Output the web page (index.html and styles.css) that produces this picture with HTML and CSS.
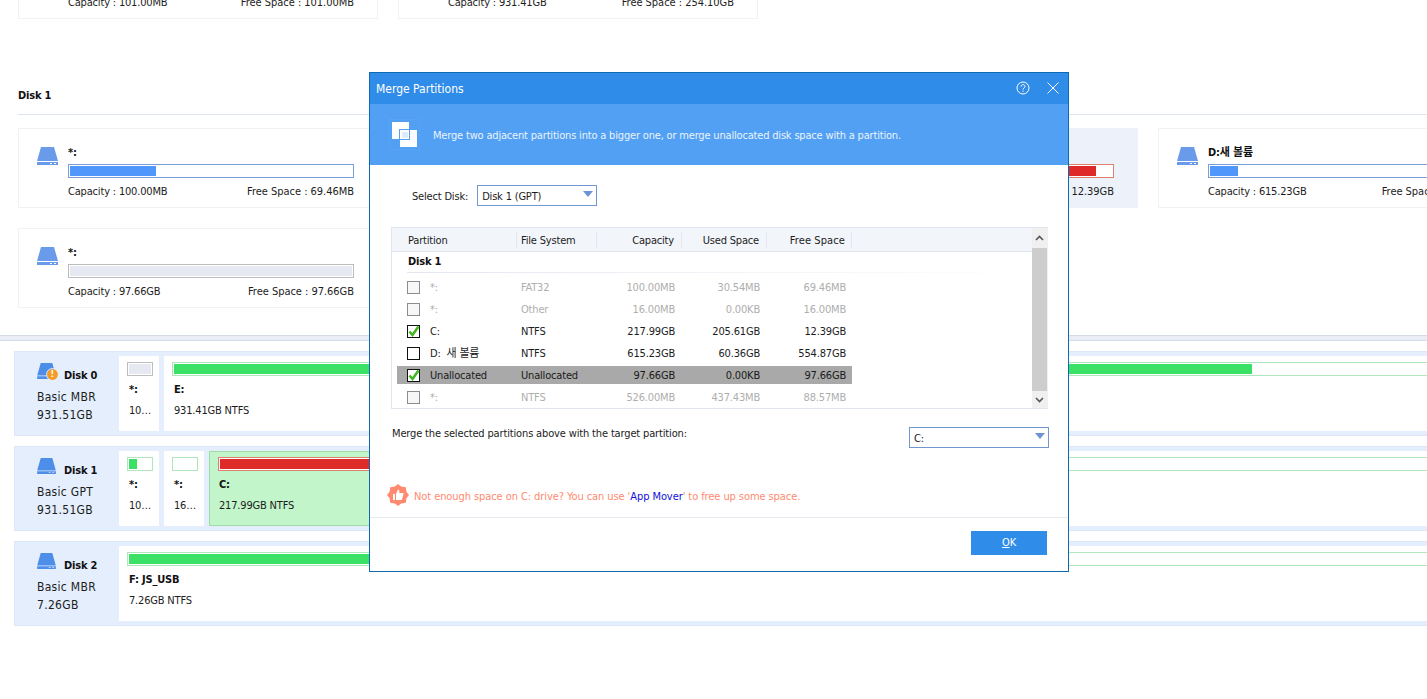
FILE: index.html
```html
<!DOCTYPE html>
<html lang="en">
<head>
<meta charset="utf-8">
<title>Merge Partitions</title>
<link rel="stylesheet" href="styles.css">
</head>
<body>
<svg class="defs" width="0" height="0" aria-hidden="true">
  <symbol id="disk" viewBox="0 0 21 18">
    <path d="M4 0H17L21 14H0Z" fill="currentColor"/>
    <path fill-rule="evenodd" d="M0 15H21V18H0ZM13 16V17H15V16ZM17 16V17H19V16Z" fill="currentColor"/>
  </symbol>
  <symbol id="tick" viewBox="0 0 13 13">
    <path d="M2.5 6.5L5.5 10L11.5 1.5" fill="none" stroke="#43b51f" stroke-width="2.6"/>
  </symbol>
</svg>

<main class="page">
  <section class="cards">
    <article class="card"><svg class="disk-icon"><use href="#disk"/></svg><div class="card-body"><div class="card-name">E:</div><div class="bar"><i class="fill blue" style="width:100%"></i></div><div class="stats"><span>Capacity : 101.00MB</span><span>Free Space : 101.00MB</span></div></div></article>
    <article class="card"><svg class="disk-icon"><use href="#disk"/></svg><div class="card-body"><div class="card-name">E:</div><div class="bar"><i class="fill blue" style="width:72%"></i></div><div class="stats"><span>Capacity : 931.41GB</span><span>Free Space : 254.10GB</span></div></div></article>
  </section>

  <h2 class="disk-title">Disk 1</h2>
  <section class="cards">
    <article class="card"><svg class="disk-icon"><use href="#disk"/></svg><div class="card-body"><div class="card-name">*:</div><div class="bar"><i class="fill blue" style="width:30.5%"></i></div><div class="stats"><span>Capacity : 100.00MB</span><span>Free Space : 69.46MB</span></div></div></article>
    <article class="card"><svg class="disk-icon"><use href="#disk"/></svg><div class="card-body"><div class="card-name">*:</div><div class="bar"><i class="fill blue" style="width:0"></i></div><div class="stats"><span>Capacity : 16.00MB</span><span>Free Space : 16.00MB</span></div></div></article>
    <article class="card selected"><svg class="disk-icon"><use href="#disk"/></svg><div class="card-body"><div class="card-name">C:</div><div class="bar bar-red"><i class="fill red" style="width:94.3%"></i></div><div class="stats"><span>Capacity : 217.99GB</span><span>Free Space : 12.39GB</span></div></div></article>
    <article class="card"><svg class="disk-icon"><use href="#disk"/></svg><div class="card-body"><div class="card-name">D:새 볼륨</div><div class="bar"><i class="fill blue" style="width:9.8%"></i></div><div class="stats"><span>Capacity : 615.23GB</span><span>Free Space : 554.87GB</span></div></div></article>
    <article class="card"><svg class="disk-icon"><use href="#disk"/></svg><div class="card-body"><div class="card-name">*:</div><div class="bar bar-grey"><i class="fill grey" style="width:100%"></i></div><div class="stats"><span>Capacity : 97.66GB</span><span>Free Space : 97.66GB</span></div></div></article>
  </section>

  <div class="divider"></div>

  <section class="disks">
    <div class="disk-row">
      <div class="disk-side">
        <div class="disk-head"><span class="disk-badge"><svg class="disk-icon bright"><use href="#disk"/></svg><b class="warn">!</b></span><b class="disk-name">Disk 0</b></div>
        <div>Basic MBR</div><div>931.51GB</div>
      </div>
      <div class="part small"><div class="mini mini-grey"><i class="fill grey" style="width:100%"></i></div><b>*:</b><span class="part-info">100.00MB NTFS</span></div>
      <div class="part wide"><div class="mini"><i class="fill green" style="width:78%"></i></div><b>E:</b><span class="part-info">931.41GB NTFS</span></div>
    </div>
    <div class="disk-row">
      <div class="disk-side">
        <div class="disk-head"><svg class="disk-icon bright"><use href="#disk"/></svg><b class="disk-name">Disk 1</b></div>
        <div>Basic GPT</div><div>931.51GB</div>
      </div>
      <div class="part small"><div class="mini"><i class="fill green" style="width:36%"></i></div><b>*:</b><span class="part-info">100.00MB FAT32</span></div>
      <div class="part small"><div class="mini"></div><b>*:</b><span class="part-info">16.00MB Other</span></div>
      <div class="part part-c"><div class="mini mini-red"><i class="fill red" style="width:94%"></i></div><b>C:</b><span class="part-info">217.99GB NTFS</span></div>
      <div class="part wide"><div class="mini"></div><b>D:새 볼륨</b><span class="part-info">615.23GB NTFS</span></div>
    </div>
    <div class="disk-row">
      <div class="disk-side">
        <div class="disk-head"><svg class="disk-icon bright"><use href="#disk"/></svg><b class="disk-name">Disk 2</b></div>
        <div>Basic MBR</div><div>7.26GB</div>
      </div>
      <div class="part wide"><div class="mini"><i class="fill green" style="width:50%"></i></div><b>F: JS_USB</b><span class="part-info">7.26GB NTFS</span></div>
    </div>
  </section>
</main>

<div class="dialog" role="dialog" aria-label="Merge Partitions">
  <header class="dlg-title">
    <span class="dlg-name">Merge Partitions</span>
    <svg class="dlg-btn" width="14" height="14" viewBox="0 0 14 14"><circle cx="7" cy="7" r="6" fill="none" stroke="#fff"/><path d="M5 5.6C5 3 9 3 9 5.4C9 7 7 6.8 7 8.6" fill="none" stroke="#fff"/><rect x="6.5" y="9.6" width="1" height="1.2" fill="#fff"/></svg>
    <svg class="dlg-btn" width="12" height="12" viewBox="0 0 12 12"><path d="M.5.5L11.5 11.5M11.5.5L.5 11.5" stroke="#fff" fill="none"/></svg>
  </header>
  <div class="banner">
    <svg class="banner-icon" width="25" height="25" viewBox="0 0 25 25">
      <rect x="-2.5" y="-2.5" width="30" height="30" fill="none" stroke="#5fa8f5" stroke-dasharray="2 2"/>
      <rect width="17" height="17" fill="#fff"/>
      <rect x="7" y="7" width="11" height="11" fill="#52a0f3"/>
      <rect x="8" y="8" width="9" height="9" fill="#fff"/>
      <path d="M18 8H25V25H8V18H18Z" fill="#fff"/>
      <rect x="10" y="10" width="6" height="6" fill="#dcebfd"/>
    </svg>
    <p>Merge two adjacent partitions into a bigger one, or merge unallocated disk space with a partition.</p>
  </div>
  <div class="select-row">
    <label>Select Disk:</label>
    <div class="select select-disk"><span>Disk 1 (GPT)</span><i class="caret"></i></div>
  </div>
  <div class="table">
    <div class="table-main">
      <div class="thead">
        <div class="th th-part">Partition</div>
        <div class="th th-fs">File System</div>
        <div class="th th-cap">Capacity</div>
        <div class="th th-used">Used Space</div>
        <div class="th th-free">Free Space</div>
      </div>
      <div class="group">Disk 1</div>
      <div class="tr off"><span class="check"></span><span>*:</span><span>FAT32</span><span class="num">100.00MB</span><span class="num">30.54MB</span><span class="num">69.46MB</span></div>
      <div class="tr off"><span class="check"></span><span>*:</span><span>Other</span><span class="num">16.00MB</span><span class="num">0.00KB</span><span class="num">16.00MB</span></div>
      <div class="tr"><span class="check"><svg width="13" height="13"><use href="#tick"/></svg></span><span>C:</span><span>NTFS</span><span class="num">217.99GB</span><span class="num">205.61GB</span><span class="num">12.39GB</span></div>
      <div class="tr"><span class="check"></span><span>D:&nbsp; 새 볼륨</span><span>NTFS</span><span class="num">615.23GB</span><span class="num">60.36GB</span><span class="num">554.87GB</span></div>
      <div class="tr hot"><span class="check"><svg width="13" height="13"><use href="#tick"/></svg></span><span>Unallocated</span><span>Unallocated</span><span class="num">97.66GB</span><span class="num">0.00KB</span><span class="num">97.66GB</span></div>
      <div class="tr off"><span class="check"></span><span>*:</span><span>NTFS</span><span class="num">526.00MB</span><span class="num">437.43MB</span><span class="num">88.57MB</span></div>
    </div>
    <div class="scrollbar">
      <div class="sb-btn"><svg width="9" height="6" viewBox="0 0 9 6"><path d="M1 5L4.5 1.5L8 5" fill="none" stroke="#555" stroke-width="1.6"/></svg></div>
      <div class="sb-thumb"></div>
      <div class="sb-btn"><svg width="9" height="6" viewBox="0 0 9 6"><path d="M1 1L4.5 4.5L8 1" fill="none" stroke="#555" stroke-width="1.6"/></svg></div>
    </div>
  </div>
  <div class="merge-row">
    <span class="merge-label">Merge the selected partitions above with the target partition:</span>
    <div class="select select-target"><span>C:</span><i class="caret"></i></div>
  </div>
  <div class="hint">
    <svg width="22" height="22" viewBox="0 0 22 22"><path d="M11 0L14.2 2.6L18.8 3.2L19.4 7.8L22 11L19.4 14.2L18.8 18.8L14.2 19.4L11 22L7.8 19.4L3.2 18.8L2.6 14.2L0 11L2.6 7.8L3.2 3.2L7.8 2.6Z" fill="#ff8a70"/><path d="M6 10H8V16H6ZM9 10L11 5.5C12.4 5.5 12.6 7 12.2 9H16C16.6 9 16.8 9.8 16.4 10.4L15 15.4C14.8 16 14.4 16 14 16H9Z" fill="#fff"/></svg>
    <p>Not enough space on C: drive? You can use '<a href="#">App Mover</a>' to free up some space.</p>
  </div>
  <footer class="dlg-foot"><button class="ok" type="button"><u>O</u>K</button></footer>
</div>
</body>
</html>
```
FILE: styles.css
```css
* { box-sizing: border-box; }
html, body { margin: 0; height: 100%; }
body {
  position: relative;
  overflow: hidden;
  background: #fff;
  color: #1c1c1c;
  font: 11px/14px "DejaVu Sans Condensed", "DejaVu Sans", "Noto Sans CJK KR", sans-serif;
  font-stretch: condensed;
  letter-spacing: -0.18px;
}
.defs { position: absolute; }
p, h2 { margin: 0; }
.page { width: 1560px; margin-top: -61px; }

/* partition cards */
.cards { display: flex; flex-wrap: wrap; gap: 20px; width: 1520px; margin-left: 18px; }
.card {
  display: flex;
  gap: 10px;
  width: 360px;
  height: 80px;
  padding: 18px 23px 0 18px;
  border: 1px solid #f0f2f6;
  background: #fff;
}
.card.selected { background: #edf2fa; border-color: #edf2fa; }
.disk-icon { flex: none; width: 21px; height: 18px; color: #6a9bea; }
.disk-icon.bright { width: 19px; height: 16px; color: #4d8ee9; }
.card-body { flex: 1; min-width: 0; }
.card-name { height: 18px; margin-top: -1px; font-weight: 700; color: #111; line-height: 14px; }
.bar { height: 14px; padding: 1px; border: 1px solid #7b9dd6; background: #fff; }
.bar-red { border-color: #df7f6e; }
.bar-grey { border-color: #bdbdbd; }
.fill { display: block; height: 100%; }
.fill.blue { background: #4f97fb; }
.fill.red { background: #df2a2a; }
.fill.grey { background: #e6e9f1; }
.fill.green { background: #3be164; }
.stats { display: flex; justify-content: space-between; margin-top: 7px; }
.stats span:last-child { letter-spacing: -0.03px; }

.disk-title {
  display: flex;
  align-items: center;
  height: 28px;
  margin: 68px 0 13px 18px;
  padding-bottom: 11px;
  border-bottom: 1px solid #dfe5f0;
  font-size: 11px;
  line-height: 15px;
  color: #111;
}

.divider {
  height: 6px;
  margin-top: 27px;
  border-top: 1px solid #d5dbe8;
  border-bottom: 1px solid #d5dce9;
  background: #e9edf6;
}

/* disk map */
.disks { display: flex; flex-direction: column; gap: 10px; margin: 10px 0 0 14px; width: 1413px; overflow: hidden; }
.disk-row {
  display: flex;
  gap: 5px;
  height: 85px;
  padding: 4px 0;
  border: 1px solid #dde7f6;
  border-right: 0;
  background: #e4eefc;
  overflow: hidden;
}
.disk-side { flex: none; width: 99px; padding: 7px 0 0 22px; font-size: 12px; line-height: 18px; letter-spacing: 0.3px; }
.disk-head { display: flex; align-items: flex-end; gap: 8px; height: 16px; margin-bottom: 9px; }
.disk-name { margin-bottom: -4px; font-size: 11px; line-height: 14px; color: #111; letter-spacing: -0.18px; }
.disk-badge { position: relative; display: flex; }
.warn {
  position: absolute;
  right: -2px;
  bottom: -1px;
  width: 11px;
  height: 11px;
  border-radius: 50%;
  background: #f59a23;
  color: #fff;
  font-size: 9px;
  line-height: 11px;
  text-align: center;
  outline: 1px solid #e4eefc;
}
.part {
  flex: none;
  display: flex;
  flex-direction: column;
  padding: 6px 6px 0 8px;
  background: #fff;
  overflow: hidden;
}
.part b { margin: 7px 0 0 2px; color: #111; white-space: nowrap; }
.part-info { margin: 7px 0 0 2px; white-space: nowrap; overflow: hidden; text-overflow: ellipsis; }
.part.small { width: 40px; }
.part.wide { width: 1400px; }
.part-c { width: 750px; background: #c2f5ca; border: 1px solid #9fdcab; padding: 5px 5px 0 8px; }
.part-c b, .part-c .part-info { margin-left: 1px; }
.mini { flex: none; height: 14px; padding: 1px; border: 1px solid #b1e5bd; background: #fff; }
.mini-grey { border-color: #bdbdbd; }
.mini-red { border-color: #df7f6e; }

/* dialog */
.dialog {
  position: absolute;
  left: 369px;
  top: 72px;
  display: flex;
  flex-direction: column;
  width: 700px;
  height: 500px;
  border: 1px solid #0f6ab4;
  background: #fff;
}
.dlg-title { display: flex; align-items: center; gap: 17px; flex: none; height: 31px; padding: 0 9px 2px 6px; background: #2f8ce8; color: #fff; font-size: 12px; letter-spacing: 0; }
.dlg-name { flex: 1; padding-top: 2px; }
.dlg-btn { flex: none; }
.banner { display: flex; align-items: center; gap: 16px; flex: none; height: 61px; padding-left: 22px; background: #52a0f3; color: #eaf3fe; }
.banner p { padding-top: 2px; }
.banner-icon { flex: none; overflow: visible; }
.select-row { display: flex; align-items: center; gap: 9px; margin: 20px 0 0 42px; }
.select-row label { padding-top: 3px; }
.select {
  display: flex;
  align-items: center;
  justify-content: space-between;
  height: 21px;
  padding: 1px 3px 0 4px;
  border: 1px solid #7196d1;
  background: #fff;
}
.select span { padding-top: 2px; }
.select-disk { width: 120px; }
.select-target { width: 140px; }
.caret { width: 0; height: 0; border: 5px solid transparent; border-top: 6px solid #6d93d6; border-bottom: 0; margin-bottom: 4px; }

.table { display: flex; height: 182px; margin: 21px 20px 0 21px; border: 1px solid #e1e5ef; }
.table-main { flex: none; width: 640px; }
.thead { display: flex; height: 24px; padding: 4px 0 3px 16px; background: #f2f5fa; border-bottom: 1px solid #dfe4ef; }
.th { height: 16px; line-height: 17px; border-right: 1px solid #e3e7f0; }
.th-part { width: 109px; }
.th-fs { width: 80px; padding-left: 4px; }
.th-cap { width: 85px; padding-right: 7px; text-align: right; }
.th-used { width: 85px; padding-right: 7px; text-align: right; }
.th-free { width: 85px; padding-right: 6px; text-align: right; letter-spacing: 0.1px; }
.group { height: 21px; margin-left: 15px; padding: 3px 0 0 1px; border-bottom: 1px solid; border-image: linear-gradient(90deg, #e3e7f0, #fff) 1; font-weight: 700; color: #111; margin-bottom: 5px; }
.tr {
  display: grid;
  grid-template-columns: 23px 91px 75px 79px 85px 86px;
  align-items: center;
  width: 455px;
  height: 18px;
  margin: 0 0 4px 5px;
  padding-left: 10px;
  white-space: nowrap;
}
.tr > span { padding-top: 2px; }
.tr.off { color: #aeaeae; }
.tr.hot { background: #a9a9a9; color: #1a1a1a; }
.num { text-align: right; }
.tr > .check { display: block; width: 13px; height: 13px; padding: 0; border: 1px solid #111; background: #fff; overflow: visible; }
.check svg { display: block; margin: -1px 0 0 -1px; }
.off > .check { border-color: #8c8c8c; background: #f7f7f7; }
.scrollbar { flex: none; display: flex; flex-direction: column; width: 16px; background: #f0f0f0; }
.sb-btn { flex: none; display: flex; align-items: center; justify-content: center; height: 20px; padding-right: 1px; }
.sb-btn:last-child { height: 17px; }
.sb-thumb { flex: 1; margin-right: 1px; background: #cdcdcd; }

.merge-row { display: flex; justify-content: space-between; margin: 18px 19px 0 22px; }
.merge-label { line-height: 13px; letter-spacing: -0.15px; }
.hint { display: flex; align-items: center; gap: 5px; height: 22px; margin: 36px 0 0 17px; color: #ff8a70; letter-spacing: -0.08px; }
.hint svg { flex: none; }
.hint p { padding-top: 3px; }
.hint a { color: #1010d8; text-decoration: none; }
.dlg-foot { display: flex; justify-content: flex-end; margin-top: 11px; padding: 13px 21px 0 0; border-top: 1px solid #e8eaf2; }
.ok { width: 76px; height: 24px; padding: 0; border: 0; background: #2f8ce8; color: #fff; font: inherit; letter-spacing: inherit; }
```
